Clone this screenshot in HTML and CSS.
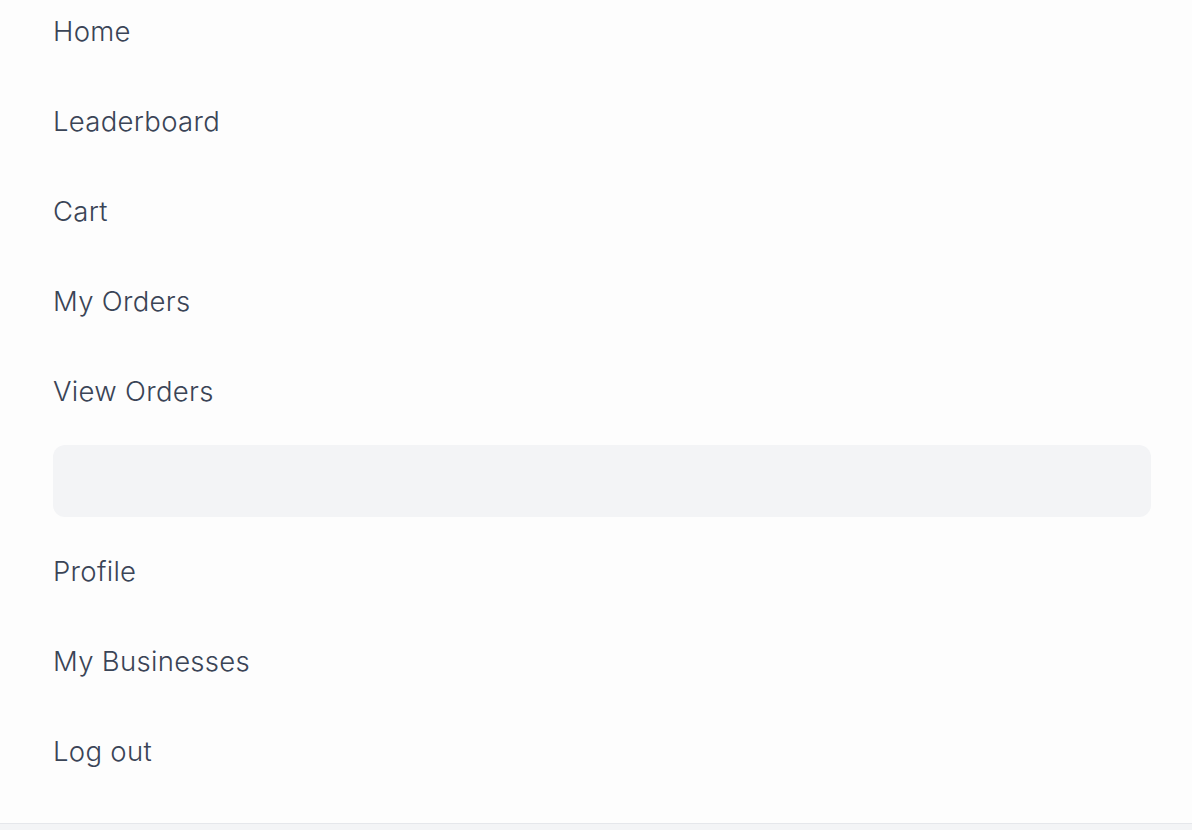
FILE: index.html
```html
<!DOCTYPE html>
<html lang="en">
<head>
<meta charset="utf-8">
<title>Menu</title>
<link rel="stylesheet" href="styles.css">
</head>
<body>
<nav class="menu">
  <ul class="menu-list">
    <li><a class="menu-item" href="#">Home</a></li>
    <li><a class="menu-item" href="#">Leaderboard</a></li>
    <li><a class="menu-item" href="#">Cart</a></li>
    <li><a class="menu-item" href="#">My Orders</a></li>
    <li><a class="menu-item" href="#">View Orders</a></li>
    <li><a class="menu-item menu-item--active" href="#"></a></li>
    <li><a class="menu-item" href="#">Profile</a></li>
    <li><a class="menu-item" href="#">My Businesses</a></li>
    <li><a class="menu-item" href="#">Log out</a></li>
  </ul>
</nav>
</body>
</html>
```
FILE: styles.css
```css
html, body {
  margin: 0;
  padding: 0;
}
body {
  background: #f3f4f6;
  font-family: Inter, "Liberation Sans", sans-serif;
  height: 830px;
  overflow: hidden;
}
.menu {
  background: #fdfdfd;
  border-bottom: 1px solid #e5e7eb;
  padding: 0 41px 18px 53px;
  height: 805px;
  overflow: hidden;
}
.menu-list {
  list-style: none;
  margin: -5px 0 0 0;
  padding: 0;
  display: flex;
  flex-direction: column;
  gap: 18px;
}
.menu-item {
  display: flex;
  align-items: center;
  height: 72px;
  border-radius: 12px;
  color: #3a4456;
  text-decoration: none;
  font-size: 27.5px;
  font-weight: 350;
  letter-spacing: 0.3px;
}
.menu-item--active {
  background: #f3f4f6;
}
```
